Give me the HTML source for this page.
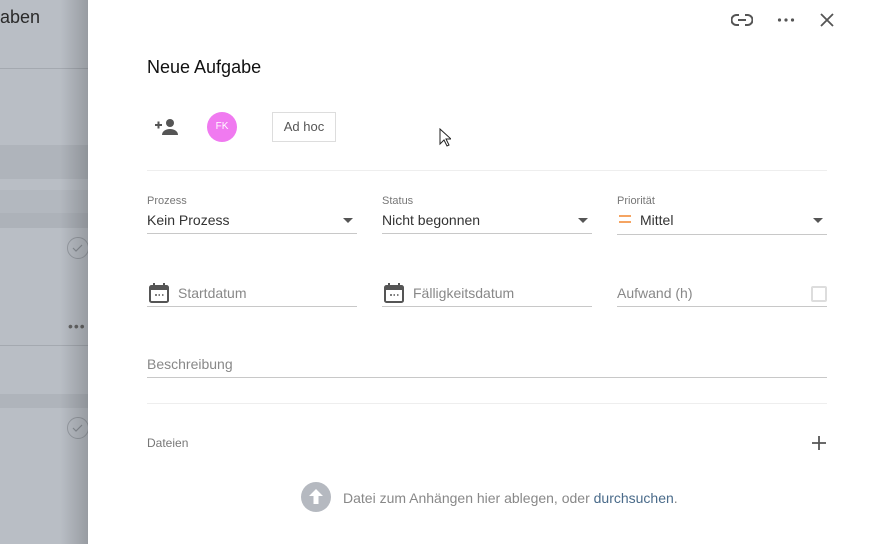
<!DOCTYPE html>
<html><head><meta charset="utf-8"><style>
*{margin:0;padding:0;box-sizing:border-box}
body{width:883px;height:544px;overflow:hidden;position:relative;background:#fff;font-family:"Liberation Sans",sans-serif;color:#222}
.abs{position:absolute}
.left{left:0;top:0;width:88px;height:544px;background:#b9bec5;overflow:hidden}
.shade{left:60px;top:0;width:28px;height:544px;background:linear-gradient(to right,rgba(0,0,0,0),rgba(0,0,0,0.18))}
.lbl{font-size:11px;color:#777}
.val{font-size:14px;color:#333}
.ph{font-size:14px;color:#888}
.line{height:1px;background:#c8c8c8}
.tri{width:0;height:0;border-left:5px solid transparent;border-right:5px solid transparent;border-top:5px solid #555}
</style></head><body>
<div class="abs left">
  <div class="abs" style="left:0;top:7px;font-size:18px;color:#2a2a2a">aben</div>
  <div class="abs" style="left:0;top:68px;width:88px;height:1px;background:#a4a9b0"></div>
  <div class="abs" style="left:0;top:145px;width:88px;height:34px;background:#afb4bb"></div>
  <div class="abs" style="left:0;top:190px;width:88px;height:23px;background:#b3b8bf"></div>
  <div class="abs" style="left:0;top:213px;width:88px;height:15px;background:#adb2b9"></div>
  <svg class="abs" style="left:67px;top:237px" width="22" height="22"><circle cx="11" cy="11" r="10.5" fill="none" stroke="#979ca3"/><path d="M6 11l3 3 6-6" fill="none" stroke="#8a8f96" stroke-width="1.2"/></svg>
  <div class="abs" style="left:68px;top:318px;font-size:14px;color:#666;letter-spacing:1px">•••</div>
  <div class="abs" style="left:0;top:345px;width:88px;height:1px;background:#a4a9b0"></div>
  <div class="abs" style="left:0;top:394px;width:88px;height:14px;background:#afb4bb"></div>
  <svg class="abs" style="left:67px;top:417px" width="22" height="22"><circle cx="11" cy="11" r="10.5" fill="none" stroke="#979ca3"/><path d="M6 11l3 3 6-6" fill="none" stroke="#8a8f96" stroke-width="1.2"/></svg>
  <div class="abs shade"></div>
</div>

<svg class="abs" style="left:731px;top:13px" width="22" height="14" viewBox="0 0 22 14"><path d="M8 2H5.5a5 5 0 0 0 0 10H8M14 2h2.5a5 5 0 0 1 0 10H14M7 7h8" fill="none" stroke="#555" stroke-width="2"/></svg>
<svg class="abs" style="left:777px;top:17px" width="18" height="6"><circle cx="2.5" cy="3" r="1.6" fill="#555"/><circle cx="9" cy="3" r="1.6" fill="#555"/><circle cx="15.5" cy="3" r="1.6" fill="#555"/></svg>
<svg class="abs" style="left:820px;top:13px" width="14" height="14"><path d="M1 1L13 13M13 1L1 13" stroke="#555" stroke-width="1.8"/></svg>

<div class="abs" style="left:147px;top:57px;font-size:18px;color:#111">Neue Aufgabe</div>

<svg class="abs" style="left:155px;top:118px" width="24" height="18" viewBox="0 0 24 18"><path d="M0 7h7M3.5 3.5v7" stroke="#555" stroke-width="2"/><circle cx="15" cy="5" r="4" fill="#555"/><path d="M7 17c0-4 4-6 8-6s8 2 8 6z" fill="#555"/></svg>
<div class="abs" style="left:207px;top:112px;width:30px;height:30px;border-radius:50%;background:#f07af0;color:#fff;font-size:10px;line-height:30px;text-align:center">FK</div>
<div class="abs" style="left:272px;top:112px;width:64px;height:30px;border:1px solid #ddd;font-size:13px;color:#555;line-height:28px;text-align:center">Ad hoc</div>
<svg class="abs" style="left:439px;top:128px" width="12" height="19"><path d="M1 1v15l4-4 3 6 2-1-3-6h5z" fill="#fff" stroke="#222" stroke-width="1"/></svg>

<div class="abs" style="left:147px;top:170px;width:680px;height:1px;background:#eee"></div>

<div class="abs lbl" style="left:147px;top:195px">Prozess</div>
<div class="abs val" style="left:147px;top:212px">Kein Prozess</div>
<div class="abs tri" style="left:343px;top:218px"></div>
<div class="abs line" style="left:147px;top:233px;width:210px"></div>

<div class="abs lbl" style="left:382px;top:195px">Status</div>
<div class="abs val" style="left:382px;top:212px">Nicht begonnen</div>
<div class="abs tri" style="left:578px;top:218px"></div>
<div class="abs line" style="left:382px;top:233px;width:210px"></div>

<div class="abs lbl" style="left:617px;top:195px">Priorität</div>
<div class="abs" style="left:619px;top:215px;width:12px;height:2px;background:#f5a462"></div>
<div class="abs" style="left:619px;top:221px;width:12px;height:2px;background:#f5a462"></div>
<div class="abs val" style="left:640px;top:212px">Mittel</div>
<div class="abs tri" style="left:813px;top:218px"></div>
<div class="abs line" style="left:617px;top:234px;width:210px"></div>

<svg class="abs" style="left:149px;top:283px" width="20" height="20" viewBox="0 0 20 20"><rect x="1" y="3" width="18" height="16" rx="1.5" fill="none" stroke="#555" stroke-width="2"/><rect x="1" y="3" width="18" height="4" fill="#555"/><path d="M5 0v4M15 0v4" stroke="#555" stroke-width="2"/><path d="M6 12h2M9.5 12h1.5M13 12h1.5" stroke="#555" stroke-width="1.5"/></svg>
<div class="abs ph" style="left:178px;top:285px">Startdatum</div>
<div class="abs line" style="left:147px;top:306px;width:210px"></div>

<svg class="abs" style="left:384px;top:283px" width="20" height="20" viewBox="0 0 20 20"><rect x="1" y="3" width="18" height="16" rx="1.5" fill="none" stroke="#555" stroke-width="2"/><rect x="1" y="3" width="18" height="4" fill="#555"/><path d="M5 0v4M15 0v4" stroke="#555" stroke-width="2"/><path d="M6 12h2M9.5 12h1.5M13 12h1.5" stroke="#555" stroke-width="1.5"/></svg>
<div class="abs ph" style="left:413px;top:285px">Fälligkeitsdatum</div>
<div class="abs line" style="left:382px;top:306px;width:210px"></div>

<div class="abs ph" style="left:617px;top:285px">Aufwand (h)</div>
<div class="abs" style="left:811px;top:286px;width:16px;height:16px;border:2px solid #ddd;border-radius:2px"></div>
<div class="abs line" style="left:617px;top:306px;width:210px"></div>

<div class="abs ph" style="left:147px;top:356px">Beschreibung</div>
<div class="abs line" style="left:147px;top:377px;width:680px"></div>

<div class="abs" style="left:147px;top:403px;width:680px;height:1px;background:#eee"></div>

<div class="abs" style="left:147px;top:436px;font-size:12px;color:#777">Dateien</div>
<svg class="abs" style="left:811px;top:435px" width="16" height="16"><path d="M8 1v14M1 8h14" stroke="#555" stroke-width="1.8"/></svg>

<svg class="abs" style="left:301px;top:482px" width="30" height="30" viewBox="0 0 30 30"><circle cx="15" cy="15" r="15" fill="#b5b9c0"/><path d="M15 7l-7 7h4.5v8h5v-8H22z" fill="#fff"/></svg>
<div class="abs" style="left:343px;top:490px;font-size:14px;color:#888">Datei zum Anhängen hier ablegen, oder <span style="color:#4a6b8a">durchsuchen</span>.</div>
</body></html>
